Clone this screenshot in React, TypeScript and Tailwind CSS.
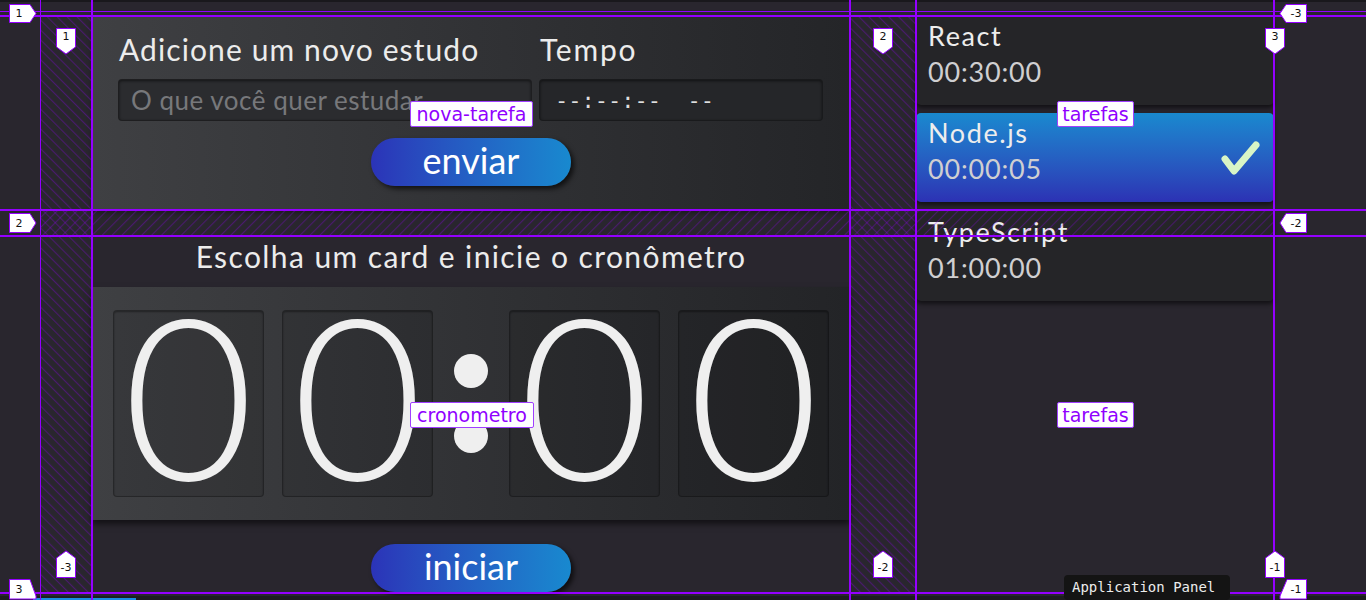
import React from "react";

const VIOLET = "#9400ff";

function Check() {
  return (
    <svg width="40" height="36" viewBox="0 0 40 36" className="shrink-0">
      <polyline
        points="5,19 14,31 36,5"
        fill="none"
        stroke="#d8f5c6"
        strokeWidth="7"
        strokeLinecap="round"
        strokeLinejoin="round"
      />
    </svg>
  );
}

type Task = { name: string; time: string; active?: boolean; extra?: boolean };

const tasks: Task[] = [
  { name: "React", time: "00:30:00" },
  { name: "Node.js", time: "00:00:05", active: true },
  { name: "TypeScript", time: "01:00:00", extra: true },
];

function TaskCard({ t }: { t: Task }) {
  const base = t.active
    ? "h-[89px] rounded-[5px] bg-gradient-to-b from-[#1989cf] to-[#2c31b4] shadow-[0_3px_4px_rgba(0,0,0,0.55)] flex items-center justify-between pl-[12px] pr-[14px]"
    : "h-[89px] rounded-[5px] bg-[#252528] shadow-[0_3px_4px_rgba(0,0,0,0.55)] flex items-center justify-between pl-[12px] pr-[14px]";
  return (
    <li className={t.extra ? base + " mt-[2px]" : base}>
      <div className="flex flex-col self-start pt-[4px]">
        <h3 className="text-[27px] leading-[32px] text-[#ededed] font-normal tracking-[1.6px]">{t.name}</h3>
        <span className="text-[27px] leading-[32px] mt-[4px] text-[#cfcfd1] tracking-[0.8px]">{t.time}</span>
      </div>
      {t.active && <Check />}
    </li>
  );
}

function DigitBox({ d }: { d: string }) {
  return (
    <div className="w-[151px] h-[187px] rounded-[4px] bg-black/10 border border-black/30 shadow-[inset_0_1px_2px_rgba(0,0,0,0.4)] flex items-center justify-center pb-[20px] overflow-hidden">
      <span className="text-[226px] leading-[166px] text-[#efefef] font-light">{d}</span>
    </div>
  );
}

function Overlay() {
  const hl = (y: number, h: number) => <rect x={0} y={y} width={1366} height={h} fill={VIOLET} />;
  const vl = (x: number, w: number) => <rect x={x} y={0} width={w} height={600} fill={VIOLET} />;
  const txt = (x: number, y: number, s: string) => (
    <text x={x} y={y} textAnchor="middle" dominantBaseline="central" fontSize="11" fill="#111" fontFamily="DejaVu Sans, sans-serif">
      {s}
    </text>
  );
  const poly = (pts: string) => <polygon points={pts} fill="#fff" stroke={VIOLET} strokeWidth="1" />;
  return (
    <svg className="absolute left-0 top-0 pointer-events-none" width="1366" height="600">
      <defs>
        <pattern id="hatchA" width="7" height="7" patternUnits="userSpaceOnUse" patternTransform="rotate(-45)">
          <rect x="0" y="0" width="1.1" height="7" fill="rgba(148,0,255,0.3)" />
        </pattern>
        <pattern id="hatchB" width="7" height="7" patternUnits="userSpaceOnUse" patternTransform="rotate(45)">
          <rect x="0" y="0" width="1.1" height="7" fill="rgba(148,0,255,0.3)" />
        </pattern>
      </defs>
      <rect x={40} y={16} width={52} height={576} fill="url(#hatchA)" />
      <rect x={850} y={16} width={66} height={576} fill="url(#hatchA)" />
      <rect x={40} y={210} width={1234} height={26} fill="url(#hatchB)" />
      {hl(11, 1)}
      {hl(15, 2)}
      {hl(209, 2)}
      {hl(235, 2)}
      {hl(592, 2)}
      {vl(40, 1)}
      {vl(91, 2)}
      {vl(849, 2)}
      {vl(915, 2)}
      {vl(1273, 2)}

      {poly("9.5,4.5 30,4.5 36,13.5 30,22.5 9.5,22.5")}
      {txt(19, 13.5, "1")}
      {poly("9.5,213.5 30,213.5 36,223 30,232.5 9.5,232.5")}
      {txt(19, 223, "2")}
      {poly("9.5,579.5 30,579.5 36,596 36,599 9.5,599")}
      {txt(19, 589, "3")}

      {poly("1280,13.5 1286,4.5 1306.5,4.5 1306.5,22.5 1286,22.5")}
      {txt(1296, 13.5, "-3")}
      {poly("1280,223 1286,213.5 1306.5,213.5 1306.5,232.5 1286,232.5")}
      {txt(1296, 223, "-2")}
      {poly("1287,579.5 1306.5,579.5 1306.5,599 1280,599 1280,596")}
      {txt(1296, 589, "-1")}

      {poly("56.5,28.5 75.5,28.5 75.5,47 66,54 56.5,47")}
      {txt(66, 36.5, "1")}
      {poly("873.5,28.5 892.5,28.5 892.5,47 883,54 873.5,47")}
      {txt(883, 36.5, "2")}
      {poly("1265.5,28.5 1284.5,28.5 1284.5,47 1275,54 1265.5,47")}
      {txt(1275, 36.5, "3")}

      {poly("66,551 75.5,558 75.5,577.5 56.5,577.5 56.5,558")}
      {txt(66, 567, "-3")}
      {poly("883,551 892.5,558 892.5,577.5 873.5,577.5 873.5,558")}
      {txt(883, 567, "-2")}
      {poly("1275,551 1284.5,558 1284.5,577.5 1265.5,577.5 1265.5,558")}
      {txt(1275, 567, "-1")}
    </svg>
  );
}

function AreaLabel({ text, cls }: { text: string; cls: string }) {
  return (
    <div
      className={
        "absolute h-[26px] bg-white border border-[#a040ff] rounded-[2px] flex items-center justify-center text-[19px] leading-none text-[#9000ff] font-['DejaVu_Sans',sans-serif] " +
        cls
      }
    >
      {text}
    </div>
  );
}

export default function App() {
  return (
    <div className="relative w-[1366px] h-[600px] overflow-hidden bg-[#29262e] font-['Lato',sans-serif]">
      <div className="h-[2px] bg-[#19181c]" />
      <main className="grid grid-cols-[758px_358px] grid-rows-[194px_356px] gap-x-[66px] gap-y-[26px] ml-[92px] mt-[14px]">
        {/* nova-tarefa */}
        <form className="col-start-1 row-start-1 bg-gradient-to-r from-[#3f4043] to-[#242528] shadow-[0_3px_5px_rgba(0,0,0,0.35)] px-[26px] pt-[15px] flex flex-col">
          <div className="grid grid-cols-[414px_284px] gap-x-[7px]">
            <label className="text-[30px] leading-[36px] text-[#ececec] ml-[1px] tracking-[1.1px]">Adicione um novo estudo</label>
            <label className="text-[30px] leading-[36px] text-[#ececec] ml-[1px] tracking-[1.8px]">Tempo</label>
            <input
              readOnly
              placeholder="O que você quer estudar"
              className="mt-[12px] h-[42px] rounded-[4px] bg-[#2b2c2f] border border-black/30 shadow-[inset_0_1px_3px_rgba(0,0,0,0.55)] pl-[12px] text-[26px] tracking-[0.5px] text-[#ddd] placeholder:text-[#77787b] outline-none font-['Lato',sans-serif]"
            />
            <div className="mt-[12px] h-[42px] rounded-[4px] bg-[#252629] border border-black/30 shadow-[inset_0_1px_3px_rgba(0,0,0,0.55)] pl-[15px] flex items-center text-[22px] text-[#dedede] font-['DejaVu_Sans_Mono',monospace] whitespace-pre">
              {"--:--:--  --"}
            </div>
          </div>
          <button
            type="button"
            className="mt-[17px] self-center w-[200px] h-[48px] rounded-full bg-gradient-to-r from-[#2b33b8] to-[#1889cf] text-white text-[36px] leading-none pb-[4px] shadow-[3px_3px_5px_rgba(0,0,0,0.65)]"
          >
            enviar
          </button>
        </form>

        {/* tarefas */}
        <aside className="col-start-2 row-start-1 row-span-2">
          <ul className="flex flex-col gap-[8px]">
            {tasks.map((t) => (
              <TaskCard key={t.name} t={t} />
            ))}
          </ul>
        </aside>

        {/* cronometro */}
        <section className="col-start-1 row-start-2 flex flex-col">
          <div className="h-[51px] pt-[2px] text-center text-[30px] leading-[36px] tracking-[1.4px] text-[#ececec]">
            Escolha um card e inicie o cronômetro
          </div>
          <div className="h-[234px] bg-gradient-to-r from-[#3f4043] to-[#232427] shadow-[0_4px_6px_rgba(0,0,0,0.55)] flex items-center pl-[21px]">
            <DigitBox d="0" />
            <div className="ml-[18px]">
              <DigitBox d="0" />
            </div>
            <div className="w-[76px] h-[187px] flex flex-col items-center justify-center gap-[31px]">
              <span className="w-[34px] h-[34px] rounded-full bg-[#efefef]" />
              <span className="w-[34px] h-[34px] rounded-full bg-[#efefef]" />
            </div>
            <DigitBox d="0" />
            <div className="ml-[18px]">
              <DigitBox d="0" />
            </div>
          </div>
          <button
            type="button"
            className="mt-[24px] self-center w-[200px] h-[48px] rounded-full bg-gradient-to-r from-[#2b33b8] to-[#1889cf] text-white text-[36px] leading-none pb-[4px] shadow-[3px_3px_5px_rgba(0,0,0,0.65)]"
          >
            iniciar
          </button>
        </section>
      </main>

      <div className="absolute left-0 top-[596px] w-[1366px] h-[4px] bg-[#1d1d1f]">
        <div className="absolute left-[33px] top-[2px] w-[103px] h-[2px] bg-[#1a8fe0]" />
      </div>

      <Overlay />

      <AreaLabel text="nova-tarefa" cls="left-[410px] top-[101px] w-[123px]" />
      <AreaLabel text="tarefas" cls="left-[1057px] top-[101px] w-[77px]" />
      <AreaLabel text="cronometro" cls="left-[410px] top-[402px] w-[124px]" />
      <AreaLabel text="tarefas" cls="left-[1057px] top-[402px] w-[77px]" />

      <div className="absolute left-[1064px] top-[575px] w-[166px] h-[25px] rounded-[4px] bg-[#141414] flex items-center pl-[8px] text-[14px] text-[#ececec] font-['DejaVu_Sans_Mono',monospace]">
        Application Panel
      </div>
    </div>
  );
}
